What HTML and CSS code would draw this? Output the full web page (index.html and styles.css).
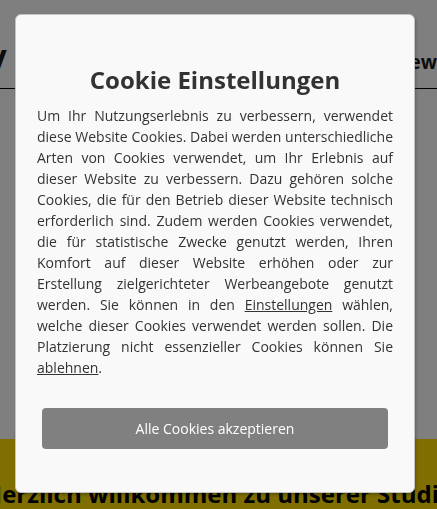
FILE: index.html
```html
<!DOCTYPE html>
<html lang="de">
<head>
<meta charset="utf-8">
<title>Cookie Einstellungen</title>
<link rel="stylesheet" href="styles.css">
</head>
<body>
<div class="page">
  <header class="site-header">
    <span class="logo">/</span>
    <nav class="nav"><span class="nav-item">Interview</span></nav>
  </header>
  <main class="main"></main>
  <section class="hero">
    <h1 class="hero-title">Herzlich willkommen zu unserer Studie</h1>
  </section>
</div>
<div class="overlay"></div>
<div class="modal" role="dialog" aria-labelledby="cookie-title">
  <h2 class="modal-title" id="cookie-title">Cookie Einstellungen</h2>
  <p class="modal-text">Um Ihr Nutzungserlebnis zu verbessern, verwendet diese Website Cookies. Dabei werden unterschiedliche Arten von Cookies verwendet, um Ihr Erlebnis auf dieser Website zu verbessern. Dazu gehören solche Cookies, die für den Betrieb dieser Website technisch erforderlich sind. Zudem werden Cookies verwendet, die für statistische Zwecke genutzt werden, Ihren Komfort auf dieser Website erhöhen oder zur Erstellung zielgerichteter Werbeangebote genutzt werden. Sie können in den <a class="link" href="#">Einstellungen</a> wählen, welche dieser Cookies verwendet werden sollen. Die Platzierung nicht essenzieller Cookies können Sie <a class="link" href="#">ablehnen</a>.</p>
  <button class="btn-accept" type="button">Alle Cookies akzeptieren</button>
</div>
</body>
</html>
```

FILE: styles.css
```css
html, body {
  margin: 0;
  padding: 0;
  height: 100%;
}
body {
  font-family: "Open Sans", "Noto Sans", sans-serif;
  background: #ffffff;
  color: #000;
  overflow: hidden;
}
.page {
  display: flex;
  flex-direction: column;
  height: 100%;
}
.site-header {
  height: 89px;
  border-bottom: 1px solid #000;
  display: flex;
  align-items: center;
  justify-content: space-between;
  box-sizing: border-box;
  padding-top: 36px;
  overflow: hidden;
}
.logo {
  font-size: 36px;
  font-weight: 700;
  color: #1a1a1a;
  margin-left: -8px;
}
.nav {
  display: flex;
  justify-content: flex-end;
}
.nav-item {
  font-size: 19px;
  font-weight: 700;
  color: #1a1a1a;
  white-space: nowrap;
}
.main {
  height: 350px;
}
.hero {
  flex: 1;
  background: #ffde00;
  display: flex;
  justify-content: center;
  overflow: hidden;
}
.hero-title {
  margin: 38px 0 0;
  font-size: 24px;
  font-weight: 700;
  white-space: nowrap;
  color: #000;
}
.overlay {
  position: fixed;
  inset: 0;
  background: rgba(0, 0, 0, 0.5);
}
.modal {
  position: absolute;
  left: 15px;
  top: 14px;
  width: 400px;
  box-sizing: border-box;
  background: #f9f9f9;
  border: 1px solid #c4c4c4;
  border-radius: 6px;
  box-shadow: 1px 2px 3px rgba(0, 0, 0, 0.25);
  padding: 48px 21px 43px;
  display: flex;
  flex-direction: column;
}
.modal-title {
  margin: 0 0 8px;
  font-size: 24px;
  line-height: 1.4;
  font-weight: 700;
  text-align: center;
  color: #333;
}
.modal-text {
  margin: 0;
  font-size: 14px;
  line-height: 21px;
  text-align: justify;
  color: #333;
}
.link {
  color: #333;
  text-decoration: underline;
}
.btn-accept {
  margin: 30px 5px 0;
  height: 41px;
  border: 0;
  border-radius: 4px;
  background: #808080;
  color: #fff;
  font-family: "Open Sans", "Noto Sans", sans-serif;
  font-size: 14px;
  cursor: pointer;
}
```
